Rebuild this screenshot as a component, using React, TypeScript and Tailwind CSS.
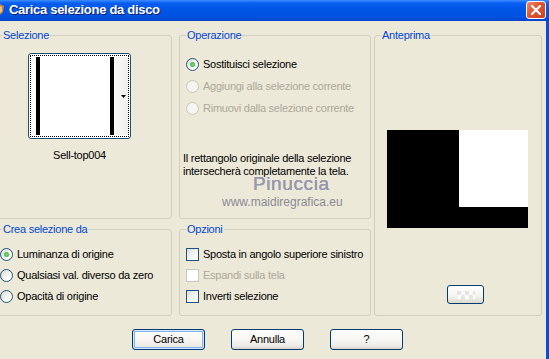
import React from "react";

function Radio({ checked = false, disabled = false }: { checked?: boolean; disabled?: boolean }) {
  return (
    <span
      className={`w-[13px] h-[13px] rounded-full border shrink-0 flex items-center justify-center ${
        disabled
          ? "border-[#CAC8BB] bg-[#F6F5F0]"
          : "border-[#1C5180] bg-[linear-gradient(135deg,#DCD7CB,#FFFFFF_70%)]"
      }`}
    >
      {checked && (
        <span className="w-[5px] h-[5px] rounded-full bg-[radial-gradient(circle,#7FE07F,#21A121)]" />
      )}
    </span>
  );
}

function Check({ disabled = false }: { disabled?: boolean }) {
  return (
    <span
      className={`w-[13px] h-[13px] border shrink-0 ${
        disabled
          ? "border-[#CAC8BB] bg-[#FFFFFF]"
          : "border-[#1C5180] bg-[linear-gradient(135deg,#DCDCD7,#FFFFFF_75%)]"
      }`}
    />
  );
}

function Group({
  label,
  className = "",
  children,
}: {
  label: string;
  className?: string;
  children?: React.ReactNode;
}) {
  return (
    <fieldset className={`min-w-0 m-0 p-0 border border-[#D0D0BF] rounded-[3px] ${className}`}>
      <legend className="ml-[6px] px-[1px] leading-[13px] text-[#0046D5]">{label}</legend>
      <div className="relative flow-root">{children}</div>
    </fieldset>
  );
}

function Btn({ children, def = false }: { children: React.ReactNode; def?: boolean }) {
  return (
    <div
      className={`w-[73px] h-[21px] rounded-[3px] border border-[#003C74] flex items-center justify-center leading-none bg-[linear-gradient(180deg,#FFFFFF_0%,#F7F6F2_50%,#ECEBE6_85%,#D6D0C5_100%)] ${
        def ? "shadow-[inset_0_0_0_1px_#CEE7FF,inset_0_0_0_2px_#8CB2EA]" : ""
      }`}
    >
      {children}
    </div>
  );
}

export default function App() {
  return (
    <div className="w-[549px] h-[359px] overflow-hidden bg-[#ECE9D8] flex flex-col font-['Liberation_Sans',Arial,sans-serif] text-[11px] text-black whitespace-nowrap">
      {/* Title bar */}
      <div className="h-[21px] shrink-0 flex items-start bg-[linear-gradient(180deg,#3D8DFF_0%,#0A5FF2_14%,#0056E6_40%,#0053E1_80%,#0045CC_100%)]">
        <svg width="5" height="16" viewBox="0 0 5 16" className="mt-[2px] shrink-0">
          <path d="M0 2 L4 4 L3 10 L0 13 Z" fill="#C8803C" />
          <path d="M0 4 L2 5 L2 9 L0 11 Z" fill="#F2C27A" />
        </svg>
        <div className="ml-[4px] mt-[2px] text-white font-bold text-[13px] leading-[16px] tracking-[-0.3px] [text-shadow:1px_1px_0_#0A1E6E]">
          Carica selezione da disco
        </div>
        <div className="flex-1" />
        <div className="mt-[1px] mr-[3px] w-[20px] h-[18px] rounded-[3px] border border-white bg-[linear-gradient(135deg,#F08A6E_0%,#E25A34_40%,#C8401E_100%)] flex items-center justify-center">
          <svg width="10" height="10" viewBox="0 0 10 10">
            <path d="M1 1 L9 9 M9 1 L1 9" stroke="white" strokeWidth="2.2" strokeLinecap="square" />
          </svg>
        </div>
      </div>

      {/* Body + right frame */}
      <div className="flex-1 flex min-h-0 tracking-[-0.25px]">
        <div className="flex-1 flex flex-col pt-[8px]">
          <div className="flex items-start">
            {/* Left column */}
            <div className="ml-[-5px] w-[177px] shrink-0 flex flex-col">
              <Group label="Selezione" className="h-[190px]">
                <div className="mt-[11px] ml-[32px] w-[103px] flex flex-col">
                  <div className="w-[103px] h-[86px] rounded-[3px] border border-[#1C5180] bg-white p-[1px]">
                    <div className="w-full h-full border border-dotted border-black flex py-[1px] pl-[5px]">
                      <div className="w-[4px] bg-black" />
                      <div className="w-[70px] bg-white" />
                      <div className="w-[4px] bg-black" />
                      <div className="flex-1 bg-[linear-gradient(90deg,#FAFAF8,#EFEFEA)] flex items-center justify-end pr-[2px]">
                        <svg width="5" height="3" viewBox="0 0 5 3">
                          <path d="M0 0 L5 0 L2.5 3 Z" fill="black" />
                        </svg>
                      </div>
                    </div>
                  </div>
                  <div className="mt-[10px] text-center leading-[13px]">Sell-top004</div>
                </div>
              </Group>
              <Group label="Crea selezione da" className="h-[93px] mt-[4px]">
                <div className="mt-[8px] pl-[4px] flex flex-col">
                  <div className="h-[21px] flex items-center gap-[4px]">
                    <Radio checked />
                    <span>Luminanza di origine</span>
                  </div>
                  <div className="h-[21px] flex items-center gap-[4px]">
                    <Radio />
                    <span>Qualsiasi val. diverso da zero</span>
                  </div>
                  <div className="h-[21px] flex items-center gap-[4px]">
                    <Radio />
                    <span>Opacità di origine</span>
                  </div>
                </div>
              </Group>
            </div>

            {/* Middle column */}
            <div className="ml-[7px] w-[192px] shrink-0 flex flex-col">
              <Group label="Operazione" className="h-[190px]">
                <div className="mt-[11px] pl-[6px] flex flex-col">
                  <div className="h-[22px] flex items-center gap-[4px]">
                    <Radio checked />
                    <span>Sostituisci selezione</span>
                  </div>
                  <div className="h-[22px] flex items-center gap-[4px] text-[#ACA899]">
                    <Radio disabled />
                    <span>Aggiungi alla selezione corrente</span>
                  </div>
                  <div className="h-[22px] flex items-center gap-[4px] text-[#ACA899]">
                    <Radio disabled />
                    <span>Rimuovi dalla selezione corrente</span>
                  </div>
                </div>
                <div className="mt-[33px] pl-[3px] leading-[13px]">
                  Il rettangolo originale della selezione
                  <br />
                  intersecherà completamente la tela.
                </div>
                <div className="absolute left-[73px] top-[136px] text-[19px] leading-[12px] text-[#9898B0] tracking-[0.6px] [text-shadow:0_0_0.5px_#7A7A92]">
                  Pinuccia
                </div>
                <div className="absolute left-[42px] top-[154px] text-[12px] leading-[12px] text-[#8A8A96] tracking-[0px]">
                  www.maidiregrafica.eu
                </div>
              </Group>
              <Group label="Opzioni" className="h-[93px] mt-[4px]">
                <div className="mt-[8px] pl-[6px] flex flex-col">
                  <div className="h-[21px] flex items-center gap-[4px]">
                    <Check />
                    <span>Sposta in angolo superiore sinistro</span>
                  </div>
                  <div className="h-[21px] flex items-center gap-[4px] text-[#ACA899]">
                    <Check disabled />
                    <span>Espandi sulla tela</span>
                  </div>
                  <div className="h-[21px] flex items-center gap-[4px]">
                    <Check />
                    <span>Inverti selezione</span>
                  </div>
                </div>
              </Group>
            </div>

            {/* Right column */}
            <div className="ml-[3px] w-[168px] shrink-0">
              <Group label="Anteprima" className="h-[287px]">
                <div className="mt-[88px] ml-[12px] w-[141px] h-[98px] bg-black flex justify-end items-start">
                  <div className="w-[69px] h-[77px] bg-white" />
                </div>
                <div className="mt-[57px] ml-[72px] w-[37px] h-[19px] rounded-[3px] border border-[#003C74] bg-[linear-gradient(180deg,#FFFFFF_0%,#F4F3EE_60%,#DCD8CC_100%)] flex items-center justify-center">
                  <div className="w-[18px] h-[8px] bg-[conic-gradient(#FFFFFF_25%,#E4E4E4_0_50%,#FFFFFF_0_75%,#E4E4E4_0)] bg-[length:8px_8px]" />
                </div>
              </Group>
            </div>
          </div>

          {/* Buttons */}
          <div className="mt-[13px] pl-[132px] flex gap-[26px]">
            <Btn def>Carica</Btn>
            <Btn>Annulla</Btn>
            <Btn>?</Btn>
          </div>
        </div>
        <div className="w-[3px] shrink-0 bg-[#0A4BDE]" />
      </div>
    </div>
  );
}
